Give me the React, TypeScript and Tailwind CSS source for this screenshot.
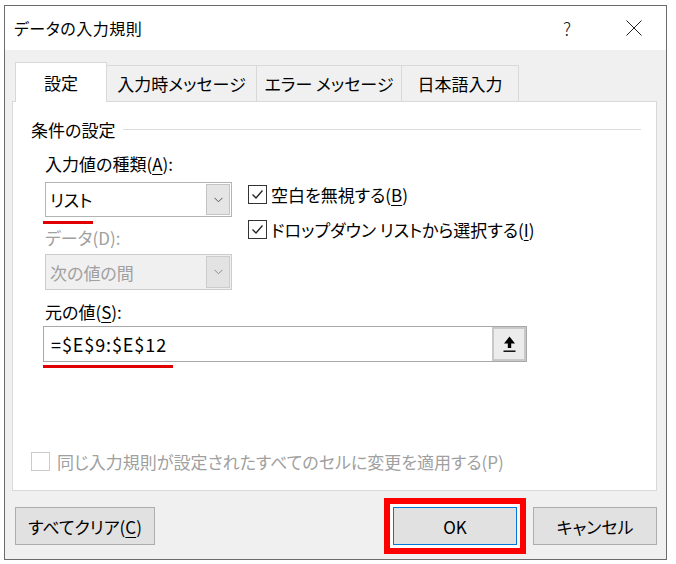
import React from "react";

function Accel({ children }: { children: React.ReactNode }) {
  return <span className="underline underline-offset-[3px] decoration-1">{children}</span>;
}

function CheckBox({ checked, disabled }: { checked?: boolean; disabled?: boolean }) {
  return (
    <span
      className={
        disabled
          ? "flex w-[19px] h-[19px] shrink-0 border border-[#cccccc] bg-white"
          : "flex w-[19px] h-[19px] shrink-0 items-center justify-center border border-[#333333] bg-white"
      }
    >
      {checked && (
        <svg width="13" height="13" viewBox="0 0 13 13">
          <polyline points="1.5,6.5 5,10 11.5,2.5" fill="none" stroke="#222" strokeWidth="1.3" />
        </svg>
      )}
    </span>
  );
}

function Chevron({ color }: { color: string }) {
  return (
    <svg width="9" height="6" viewBox="0 0 9 6">
      <polyline points="0.5,0.8 4.5,4.8 8.5,0.8" fill="none" stroke={color} strokeWidth="1" />
    </svg>
  );
}

function Combo({ value, disabled }: { value: string; disabled?: boolean }) {
  return (
    <div
      className={
        disabled
          ? "flex h-[36px] w-[187px] items-stretch border border-[#cccccc] bg-[#f0f0f0]"
          : "flex h-[35px] w-[187px] items-stretch border border-[#b4b4b4] bg-white"
      }
    >
      <span className={disabled ? "flex flex-1 items-center pl-[4px] text-[#a0a0a0]" : "flex flex-1 items-center pl-[4px]"}>
        {value}
      </span>
      <span
        className={
          disabled
            ? "m-[1px] flex w-[24px] items-center justify-center border border-[#cccccc] bg-[#e3e3e3]"
            : "m-[1px] flex w-[24px] items-center justify-center border border-[#c4c4c4] bg-[#e5e5e5]"
        }
      >
        <Chevron color={disabled ? "#8a8a8a" : "#555"} />
      </span>
    </div>
  );
}

function Tab({ label, active, width }: { label: string; active?: boolean; width: string }) {
  if (active) {
    return (
      <div className={`${width} relative z-10 mb-[-1px] flex h-[40px] items-center justify-center border border-b-0 border-[#d9d9d9] bg-white`}>
        {label}
      </div>
    );
  }
  return (
    <div className={`${width} flex h-[36px] items-center justify-center border border-b-0 border-l-0 border-[#d9d9d9] bg-[#f0f0f0]`}>
      {label}
    </div>
  );
}

function DialogButton({ children, primary }: { children: React.ReactNode; primary?: boolean }) {
  return (
    <button
      className={
        primary
          ? "flex h-[38px] w-[124px] items-center justify-center border border-[#0078d7] bg-[#e1e1e1] shadow-[inset_0_0_0_1px_#e1e1e1]"
          : "flex h-[38px] items-center justify-center border border-[#adadad] bg-[#e1e1e1]"
      }
    >
      {children}
    </button>
  );
}

export default function App() {
  return (
    <div className="h-[564px] w-[676px] bg-white pl-[4px] pt-[5px] font-['Noto_Sans_CJK_JP',sans-serif] text-[17px] leading-none text-black [font-feature-settings:'palt']">
      <div className="flex h-[555px] w-[663px] flex-col border border-[#6b6b6b]">
        {/* title bar */}
        <div className="flex h-[44px] shrink-0 items-center bg-white pl-[9px]">
          <span className="text-[16px] tracking-[0.5px]">データの入力規則</span>
          <span className="ml-auto mr-[55px] text-[18px] font-light text-[#222]">?</span>
          <svg className="mr-[24px]" width="16" height="16" viewBox="0 0 16 16">
            <path d="M0.5 0.5 L15.5 15.5 M15.5 0.5 L0.5 15.5" stroke="#222" strokeWidth="1" fill="none" />
          </svg>
        </div>

        {/* body */}
        <div className="flex flex-1 flex-col bg-[#f0f0f0] pl-[7px] pt-[12px]">
          <div className="flex h-[39px] items-end pl-[3px]">
            <Tab label="設定" active width="w-[92px]" />
            <Tab label="入力時メッセージ" width="w-[150px]" />
            <Tab label="エラー メッセージ" width="w-[145px]" />
            <Tab label="日本語入力" width="w-[117px]" />
          </div>

          <div className="flex h-[390px] w-[645px] flex-col border border-[#d9d9d9] bg-white">
            <div className="mt-[15px] flex h-[24px] items-center pl-[18px] pr-[15px]">
              <span>条件の設定</span>
              <span className="ml-[8px] h-px flex-1 bg-[#dcdcdc]" />
            </div>

            <div className="mt-[10px] flex pl-[32px]">
              <div className="flex w-[187px] flex-col">
                <div className="flex h-[24px] items-center">
                  入力値の種類(<Accel>A</Accel>):
                </div>
                <div className="mt-[7px]">
                  <Combo value="リスト" />
                </div>
                <div className="ml-[-2px] mt-[4px] h-[3px] w-[50px] bg-[#e00000]" />
                <div className="mt-[1px] flex h-[24px] items-center text-[#a0a0a0]">データ(D):</div>
                <div className="mt-[5px]">
                  <Combo value="次の値の間" disabled />
                </div>
              </div>

              <div className="ml-[16px] flex flex-col gap-[16px] pt-[34px]">
                <div className="flex h-[19px] items-center gap-[4px]">
                  <CheckBox checked />
                  <span>
                    空白を無視する(<Accel>B</Accel>)
                  </span>
                </div>
                <div className="flex h-[19px] items-center gap-[4px]">
                  <CheckBox checked />
                  <span>
                    ドロップダウン リストから選択する(<Accel>I</Accel>)
                  </span>
                </div>
              </div>
            </div>

            <div className="mt-[9px] flex h-[24px] items-center pl-[32px]">
              元の値(<Accel>S</Accel>):
            </div>
            <div className="ml-[30px] mt-[3px] flex h-[36px] w-[484px] border border-[#a8a8a8] bg-white">
              <span className="flex flex-1 items-center pl-[7px] text-[18px] tracking-[0.9px]">=$E$9:$E$12</span>
              <span className="flex w-[34px] items-center justify-center border-2 border-[#c8c8c8] bg-[#ececec]">
                <svg width="13" height="17" viewBox="0 0 13 17">
                  <path d="M6.5 0.5 L12 7.5 L8.2 7.5 L8.2 12 L4.8 12 L4.8 7.5 L1 7.5 Z" fill="#000" />
                  <rect x="0.5" y="14.5" width="12" height="1.4" fill="#000" />
                </svg>
              </span>
            </div>
            <div className="ml-[30px] mt-[3px] h-[3px] w-[130px] bg-[#e00000]" />

            <div className="mb-[19px] mt-auto flex h-[19px] items-center gap-[7px] pl-[18px] text-[#a0a0a0]">
              <CheckBox disabled />
              <span>同じ入力規則が設定されたすべてのセルに変更を適用する(P)</span>
            </div>
          </div>

          <div className="mt-[7px] flex h-[56px] items-center pl-[3px]">
            <div className="w-[138px]">
              <DialogButton>
                <span className="w-[138px]">
                  すべてクリア(<Accel>C</Accel>)
                </span>
              </DialogButton>
            </div>
            <div className="ml-[231px] border-[6px] border-[#ff0000] bg-white p-[3px]">
              <DialogButton primary>OK</DialogButton>
            </div>
            <div className="ml-[7px] w-[124px]">
              <DialogButton>
                <span className="w-[122px]">キャンセル</span>
              </DialogButton>
            </div>
          </div>
        </div>
      </div>
    </div>
  );
}
